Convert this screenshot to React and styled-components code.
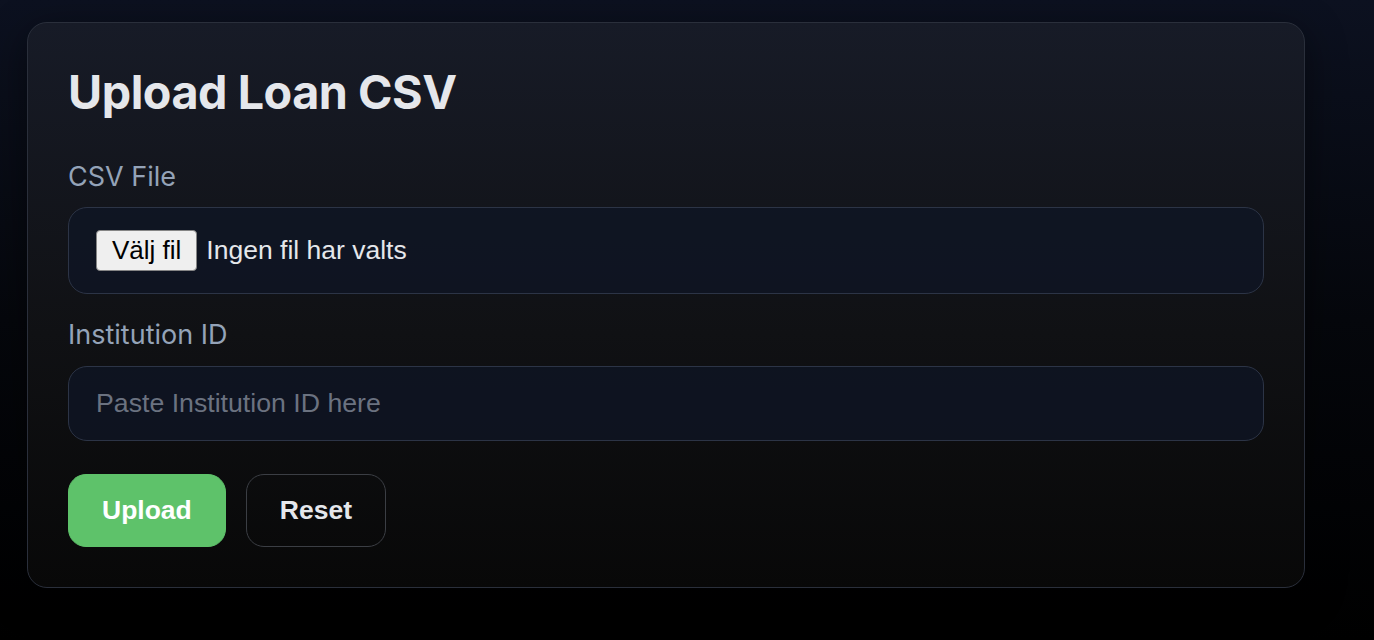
import React, { useState } from 'react'
import styled, { createGlobalStyle } from 'styled-components'

const GlobalStyle = createGlobalStyle`
  html, body {
    margin: 0;
    padding: 0;
    min-height: 100%;
  }
  body {
    background: linear-gradient(180deg, #0c1120 0%, #05070c 50%, #000 100%);
    font-family: Inter, "Noto Sans", sans-serif;
    color: #e5e7eb;
  }
  * { box-sizing: border-box; }
`

const Page = styled.div`
  min-height: 100vh;
  padding: 22px 27px;
`

const Card = styled.section`
  max-width: 1278px;
  padding: 41px 40px 40px;
  border: 1px solid #2a2f3b;
  border-radius: 20px;
  background: linear-gradient(180deg, #171b27 0%, #101114 55%, #080808 100%);
  box-shadow: 0 10px 40px rgba(0, 0, 0, 0.45);
`

const Title = styled.h1`
  margin: 0 0 40px;
  font-size: 46.7px;
  font-weight: 700;
  letter-spacing: -0.01em;
  line-height: 1.21;
  color: #e5e7eb;
`

const Field = styled.div`
  display: flex;
  flex-direction: column;
  gap: 14px;
  margin-bottom: ${p => p.$last ? '33px' : '25px'};
`

const Label = styled.label`
  font-size: 27px;
  line-height: 1.21;
  color: #94a3b8;
`

const Box = styled.div`
  display: flex;
  align-items: center;
  height: ${p => p.$tall ? '87px' : '75px'};
  padding: 0 27px;
  border: 1px solid #2c3446;
  border-radius: 19px;
  background: rgba(15, 21, 38, 0.75);
`

const HiddenFile = styled.input`
  display: none;
`

const PickButton = styled.label`
  display: inline-flex;
  align-items: center;
  height: 41px;
  padding: 0 15px;
  border: 1px solid #858585;
  border-radius: 4px;
  background: #efefef;
  color: #000;
  font-family: "Liberation Sans", Arial, sans-serif;
  font-size: 26px;
  cursor: pointer;
`

const FileName = styled.span`
  margin-left: 9px;
  font-family: "Liberation Sans", Arial, sans-serif;
  font-size: 26.5px;
  color: #e5e7eb;
`

const TextInput = styled.input`
  width: 100%;
  border: 0;
  outline: none;
  background: transparent;
  padding: 0;
  font-family: "Liberation Sans", Arial, sans-serif;
  font-size: 26.7px;
  color: #e5e7eb;

  &::placeholder {
    color: #6b7280;
  }
`

const Actions = styled.div`
  display: flex;
  gap: 20px;
`

const Button = styled.button`
  height: 73px;
  padding: 0 33px;
  border: 1px solid ${p => p.$primary ? '#5ec26a' : '#3b3e44'};
  border-radius: 18px;
  background: ${p => p.$primary ? '#5ec26a' : 'transparent'};
  color: ${p => p.$primary ? '#fff' : '#e5e7eb'};
  font-family: "Liberation Sans", Arial, sans-serif;
  font-size: 26.5px;
  font-weight: 700;
  cursor: pointer;
`

export default function App() {
  const [fileName, setFileName] = useState('')
  const [institutionId, setInstitutionId] = useState('')

  const reset = () => {
    setFileName('')
    setInstitutionId('')
  }

  return (
    <Page>
      <GlobalStyle />
      <Card>
        <Title>Upload Loan CSV</Title>
        <Field>
          <Label>CSV File</Label>
          <Box $tall>
            <PickButton htmlFor="csv">Välj fil</PickButton>
            <HiddenFile
              id="csv"
              type="file"
              accept=".csv"
              onChange={e => setFileName(e.target.files[0] ? e.target.files[0].name : '')}
            />
            <FileName>{fileName || 'Ingen fil har valts'}</FileName>
          </Box>
        </Field>
        <Field $last>
          <Label htmlFor="inst">Institution ID</Label>
          <Box>
            <TextInput
              id="inst"
              placeholder="Paste Institution ID here"
              value={institutionId}
              onChange={e => setInstitutionId(e.target.value)}
            />
          </Box>
        </Field>
        <Actions>
          <Button $primary>Upload</Button>
          <Button onClick={reset}>Reset</Button>
        </Actions>
      </Card>
    </Page>
  )
}
